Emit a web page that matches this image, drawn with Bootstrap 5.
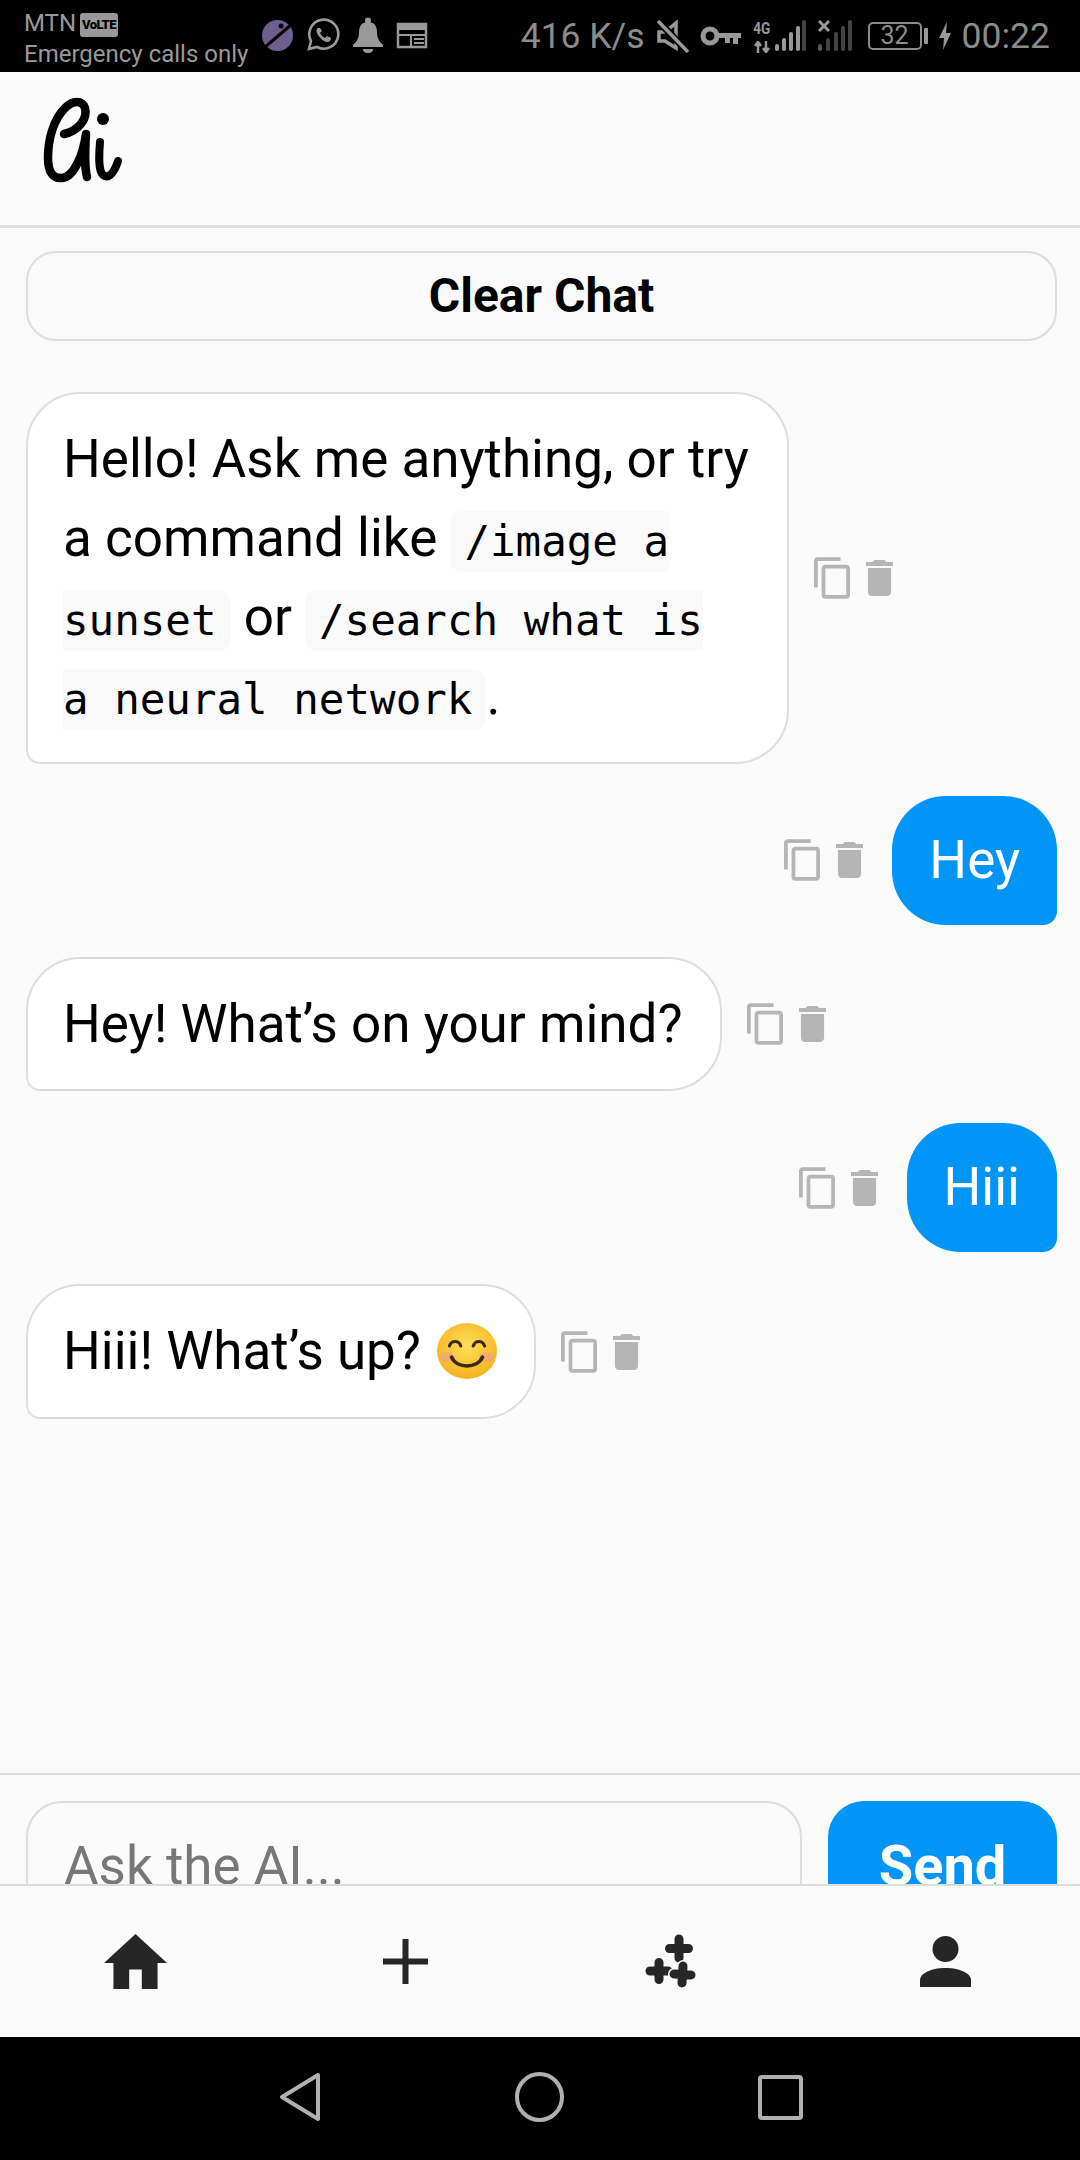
<!DOCTYPE html>
<html lang="en">
<head>
<meta charset="UTF-8">
<meta name="viewport" content="width=device-width, initial-scale=1.0">
<title>Ai chat</title>
<link href="https://cdn.jsdelivr.net/npm/bootstrap@5.3.0/dist/css/bootstrap.min.css" rel="stylesheet">
<style>
body { margin: 0; background: #fafafa; font-family: Roboto, "Liberation Sans", sans-serif; }
.phone { width: 1080px; height: 2160px; overflow: hidden; background: #fafafa; }

/* status bar */
.status-strip { height: 72px; background: #000; color: #999; padding: 0 30px 0 24px; flex: none; }
.carrier { font-size: 24px; line-height: 31px; margin-top: 5px; white-space: nowrap; }
.volte { display: inline-block; background: #999; color: #000; font-size: 13px; font-weight: 900; line-height: 20px; height: 24px; padding: 2px 2px 0; border-radius: 3px; vertical-align: 2px; margin-left: 4px; letter-spacing: -.6px; }
.left-icons { gap: 12px; margin-left: 13px; margin-top: -2px; }
.right-icons { gap: 11px; }
.speed, .clock { font-size: 35.5px; line-height: 40px; color: #8c8c8c; white-space: nowrap; }
.net-g { font-size: 17px; font-weight: 700; line-height: 17px; color: #999; transform: scaleX(.8); }
.batt { width: 54px; height: 28px; border: 2px solid #8c8c8c; border-radius: 5px; color: #8c8c8c; font-size: 25px; line-height: 24px; text-align: center; }
.batt-nub { width: 4px; height: 16px; background: #999; border-radius: 1px; margin-left: -9px; }

/* header */
.app-top { height: 156px; flex: none; border-bottom: 3px solid #ddd; padding: 23px 0 0 40px; }

/* chat */
.chat-area { padding: 23px 23px 0 26px; overflow: hidden; }
.clear-btn { height: 90px; width: 100%; display: block; background: #fafafa; border: 2px solid #ddd; border-radius: 30px; color: #000; font-size: 48px; font-weight: 700; line-height: 1; margin-bottom: 51px; }
.clear-btn:hover { background: #fafafa; border-color: #ddd; color: #000; }
.msg-line { margin-bottom: 32px; }
.bubble { font-size: 53px; line-height: 79.2px; padding: 25px 37px; border-radius: 54px; }
.bubble-ai { background: #fff; border: 2px solid #ddd; border-bottom-left-radius: 14px; color: #000; max-width: 763px; padding: 25.5px 37px 25.5px 35px; }
.bubble-me { background: #0095f6; color: #fff; border-bottom-right-radius: 14px; }
.bubble code { font-family: "DejaVu Sans Mono", "Liberation Mono", monospace; font-size: 42.5px; line-height: 1; color: #000; background: #fafafa; padding: 6px 14px; border-radius: 12px; }
.msg-tools { gap: 16px; flex: none; }
.msg-tools.on-left { margin-left: 25px; }
.msg-tools.on-right { margin-right: 29px; }
.ic-copy { width: 36px; height: 42px; fill: #b5b5b5; display: block; }
.ic-trash { width: 27px; height: 36px; fill: #b5b5b5; display: block; }
.smile { width: 60px; height: 56px; vertical-align: -10px; margin-left: 3px; }

/* composer, cut off by the tab bar */
.composer { height: 111px; flex: none; border-top: 2px solid #ddd; padding: 26px 23px 0 26px; overflow: hidden; gap: 26px; }
.ask-input { flex: 0 0 776px; height: 130px; background: #fafafa; border: 2px solid #ddd; border-radius: 36px; font-size: 53px; padding: 0 36px; color: #000; }
.ask-input::placeholder { color: #777; opacity: 1; }
.send-btn { flex: 0 0 229px; height: 130px; background: #0095f6; border: 0; border-radius: 36px; color: #fff; font-size: 56px; font-weight: 700; padding: 0; }

/* tabs */
.app-tabs { height: 153px; flex: none; border-top: 2px solid #ddd; background: #fafafa; }
.tab-cell { flex: 1 1 25%; height: 100%; }

/* android nav */
.sys-nav { height: 123px; flex: none; background: #000; gap: 194px; padding-bottom: 3px; padding-left: 2px; }
</style>
</head>
<body>
<svg width="0" height="0" class="d-block position-absolute">
  <symbol id="copy" viewBox="2 1 19 22"><path d="M16 1H4c-1.100 0-2 .9-2 2v14h2V3h12V1zm3 4H8c-1.100 0-2 .9-2 2v14c0 1.100.9 2 2 2h11c1.100 0 2-.9 2-2V7c0-1.100-.9-2-2-2zm0 16H8V7h11v14z"/></symbol>
  <symbol id="trash" viewBox="5 3 14 18" preserveAspectRatio="none"><path d="M6 19c0 1.100.9 2 2 2h8c1.100 0 2-.9 2-2V7H6v12zM19 4h-3.500l-1-1h-5l-1 1H5v2h14V4z"/></symbol>
</svg>

<div class="phone d-flex flex-column">

  <div class="status-strip d-flex justify-content-between align-items-center">
    <div class="d-flex align-items-center">
      <div class="carrier">
        <div>MTN<span class="volte">VoLTE</span></div>
        <div>Emergency calls only</div>
      </div>
      <div class="left-icons d-flex align-items-center">
        <svg width="33" height="33" viewBox="0 0 33 33"><circle cx="16.500" cy="16.500" r="15.500" fill="#6f5f8f"/><path d="M3 29 31 5" stroke="#000" stroke-width="3"/><circle cx="20" cy="7" r="2.500" fill="#000"/></svg>
        <svg width="34" height="34" viewBox="0 0 34 34"><path d="M3 31l2-8A14.500 14.500 0 1 1 11 29z" fill="none" stroke="#999" stroke-width="2.600"/><path d="M12 10c-2 1-2 4 0 7s6 7 9 7 4-2 4-4l-4-2-2 2c-2-1-4-3-5-5l2-2-2-3z" fill="#999"/></svg>
        <svg width="32" height="36" viewBox="0 0 32 36"><circle cx="16" cy="3.500" r="3" fill="#999"/><path d="M16 5c-6 0-9 4-9 10 0 6-2 9-6 13v2h30v-2c-4-4-6-7-6-13 0-6-3-10-9-10z" fill="#999"/><path d="M11 32h10c0 3-2 4-5 4s-5-1-5-4z" fill="#999"/></svg>
        <svg width="32" height="28" viewBox="0 0 32 28"><path d="M2 3h28v23H2z" fill="none" stroke="#999" stroke-width="2.500"/><path d="M2 3h28v6H2z" fill="#999"/><path d="M2 14h28M15 14v12M18 18h10M18 22h10" stroke="#999" stroke-width="2" fill="none"/></svg>
      </div>
    </div>
    <div class="right-icons d-flex align-items-center">
      <span class="speed">416 K/s</span>
      <svg width="33" height="34" viewBox="0 0 33 34"><path d="M3 13h6l11-9v25l-11-7H3z" fill="none" stroke="#999" stroke-width="3.500"/><path d="M2 2l30 31" stroke="#000" stroke-width="7"/><path d="M2 2l30 31" stroke="#999" stroke-width="3.500"/></svg>
      <svg width="41" height="20" viewBox="0 0 41 20"><circle cx="10" cy="10" r="7" fill="none" stroke="#999" stroke-width="5"/><path d="M16 7h25v5h-3v6h-5v-6h-3v5h-5v-5H16z" fill="#999"/></svg>
      <div class="d-flex align-items-end">
        <div class="d-flex flex-column align-items-center" style="width:20px">
          <span class="net-g">4G</span>
          <svg width="18" height="12" viewBox="0 0 18 12" class="mt-1"><path d="M5 12V2M2 5l3-4 3 4M13 0v10M10 7l3 4 3-4" stroke="#999" stroke-width="2.500" fill="none"/></svg>
        </div>
        <svg width="34" height="34" viewBox="0 0 34 34"><rect x="3" y="25" width="4" height="7" rx="2" fill="#999"/><rect x="10" y="19" width="4" height="13" rx="2" fill="#999"/><rect x="17" y="13" width="4" height="19" rx="2" fill="#999"/><rect x="24" y="7" width="4" height="25" rx="2" fill="#999"/><rect x="30" y="1" width="4" height="31" rx="2" fill="#444"/></svg>
      </div>
      <svg width="36" height="34" viewBox="0 0 36 34"><path d="M2 2l10 10M12 2 2 12" stroke="#999" stroke-width="3"/><rect x="1" y="25" width="4" height="7" rx="2" fill="#555"/><rect x="9" y="19" width="4" height="13" rx="2" fill="#444"/><rect x="17" y="13" width="4" height="19" rx="2" fill="#444"/><rect x="24" y="7" width="4" height="25" rx="2" fill="#444"/><rect x="31" y="1" width="4" height="31" rx="2" fill="#444"/></svg>
      <div class="batt ms-1">32</div>
      <div class="batt-nub"></div>
      <svg width="12" height="28" viewBox="0 0 12 28"><path d="M8 0 0 16h5L4 28l8-17H7z" fill="#999"/></svg>
      <span class="clock">00:22</span>
    </div>
  </div>

  <header class="app-top">
    <svg width="90" height="90" viewBox="40 95 90 90" role="img" aria-label="Ai logo">
      <path d="M64 134C78 131 88 119 85 108 82 100 73 100 65 108 53 120 48 140 48 158 48 172 53 179 62 178 74 177 83 155 86 134 85 150 84 165 87 177" fill="none" stroke="#000" stroke-width="8.500" stroke-linecap="round" stroke-linejoin="round"/>
      <path d="M100 142C99 155 98 170 103 175 110 180 115 170 118 161" fill="none" stroke="#000" stroke-width="8" stroke-linecap="round"/>
      <circle cx="103" cy="119" r="6" fill="#000"/>
    </svg>
  </header>

  <main class="chat-area flex-grow-1">
    <button type="button" class="btn clear-btn">Clear Chat</button>

    <div class="msg-line d-flex align-items-center">
      <div class="bubble bubble-ai">Hello! Ask me anything, or try a command like <code>/image a sunset</code> or <code>/search what is a neural network</code>.</div>
      <div class="msg-tools on-left d-flex align-items-center">
        <svg class="ic-copy"><use href="#copy"/></svg><svg class="ic-trash"><use href="#trash"/></svg>
      </div>
    </div>

    <div class="msg-line d-flex align-items-center justify-content-end">
      <div class="msg-tools on-right d-flex align-items-center">
        <svg class="ic-copy"><use href="#copy"/></svg><svg class="ic-trash"><use href="#trash"/></svg>
      </div>
      <div class="bubble bubble-me">Hey</div>
    </div>

    <div class="msg-line d-flex align-items-center">
      <div class="bubble bubble-ai">Hey! What’s on your mind?</div>
      <div class="msg-tools on-left d-flex align-items-center">
        <svg class="ic-copy"><use href="#copy"/></svg><svg class="ic-trash"><use href="#trash"/></svg>
      </div>
    </div>

    <div class="msg-line d-flex align-items-center justify-content-end">
      <div class="msg-tools on-right d-flex align-items-center">
        <svg class="ic-copy"><use href="#copy"/></svg><svg class="ic-trash"><use href="#trash"/></svg>
      </div>
      <div class="bubble bubble-me">Hiii</div>
    </div>

    <div class="msg-line d-flex align-items-center">
      <div class="bubble bubble-ai">Hiii! What’s up?
        <svg class="smile" viewBox="0 0 58 56" preserveAspectRatio="none" role="img" aria-label="smiling face">
          <defs><radialGradient id="faceFill" cx="50%" cy="40%" r="60%"><stop offset="0" stop-color="#fde05a"/><stop offset="1" stop-color="#f5b21f"/></radialGradient></defs>
          <ellipse cx="29" cy="28" rx="29" ry="28" fill="url(#faceFill)"/>
          <ellipse cx="10" cy="34" rx="7" ry="5" fill="#f4a08a" opacity=".7"/>
          <ellipse cx="48" cy="34" rx="7" ry="5" fill="#f4a08a" opacity=".7"/>
          <path d="M12 23c2-6 9-6 11 0M35 23c2-6 9-6 11 0" fill="none" stroke="#3c2a1a" stroke-width="3" stroke-linecap="round"/>
          <path d="M14 34c5 12 25 12 30 0" fill="none" stroke="#3c2a1a" stroke-width="3.500" stroke-linecap="round"/>
        </svg>
      </div>
      <div class="msg-tools on-left d-flex align-items-center">
        <svg class="ic-copy"><use href="#copy"/></svg><svg class="ic-trash"><use href="#trash"/></svg>
      </div>
    </div>
  </main>

  <div class="composer d-flex align-items-start">
    <input type="text" class="form-control ask-input shadow-none" placeholder="Ask the AI...">
    <button type="button" class="btn send-btn">Send</button>
  </div>

  <nav class="app-tabs d-flex">
    <div class="tab-cell d-flex justify-content-center align-items-center">
      <svg width="63" height="55" viewBox="2 3 20 17" preserveAspectRatio="none"><path d="M10 20v-6h4v6h5v-8h3L12 3 2 12h3v8z" fill="#262626"/></svg>
    </div>
    <div class="tab-cell d-flex justify-content-center align-items-center">
      <svg width="45" height="45" viewBox="0 0 45 45"><path d="M22.500 0v45M0 22.500h45" stroke="#262626" stroke-width="6"/></svg>
    </div>
    <div class="tab-cell d-flex justify-content-center align-items-center">
      <svg class="me-2" width="52" height="55" viewBox="0 0 52 55" fill="none" stroke="#262626" stroke-width="9" stroke-linecap="round">
        <path d="M34 5v19M24.500 14.500h19"/>
        <path d="M14 28.500v17M5 37h18"/>
        <path d="M38 32l-1 17M29 40l17 1" stroke="#fafafa" stroke-width="12"/>
        <path d="M38 32l-1 17M29 40l17 1"/>
      </svg>
    </div>
    <div class="tab-cell d-flex justify-content-center align-items-center">
      <svg width="51" height="51" viewBox="0 0 51 51"><circle cx="25.500" cy="13" r="13" fill="#262626"/><path d="M0 51V44C0 38 10 32 25.500 32S51 38 51 44v7z" fill="#262626"/></svg>
    </div>
  </nav>

  <div class="sys-nav d-flex justify-content-center align-items-center">
    <svg width="42" height="50" viewBox="0 0 42 50"><path d="M39 3 3 25l36 22z" fill="none" stroke="#b0b0b0" stroke-width="4" stroke-linejoin="round"/></svg>
    <svg width="49" height="50" viewBox="0 0 49 50"><ellipse cx="24.500" cy="25" rx="22.500" ry="23" fill="none" stroke="#b0b0b0" stroke-width="4"/></svg>
    <svg width="45" height="45" viewBox="0 0 45 45"><rect x="2" y="2" width="41" height="41" rx="2" fill="none" stroke="#b0b0b0" stroke-width="4"/></svg>
  </div>
</div>

<script src="https://cdn.jsdelivr.net/npm/bootstrap@5.3.0/dist/js/bootstrap.bundle.min.js"></script>
</body>
</html>
